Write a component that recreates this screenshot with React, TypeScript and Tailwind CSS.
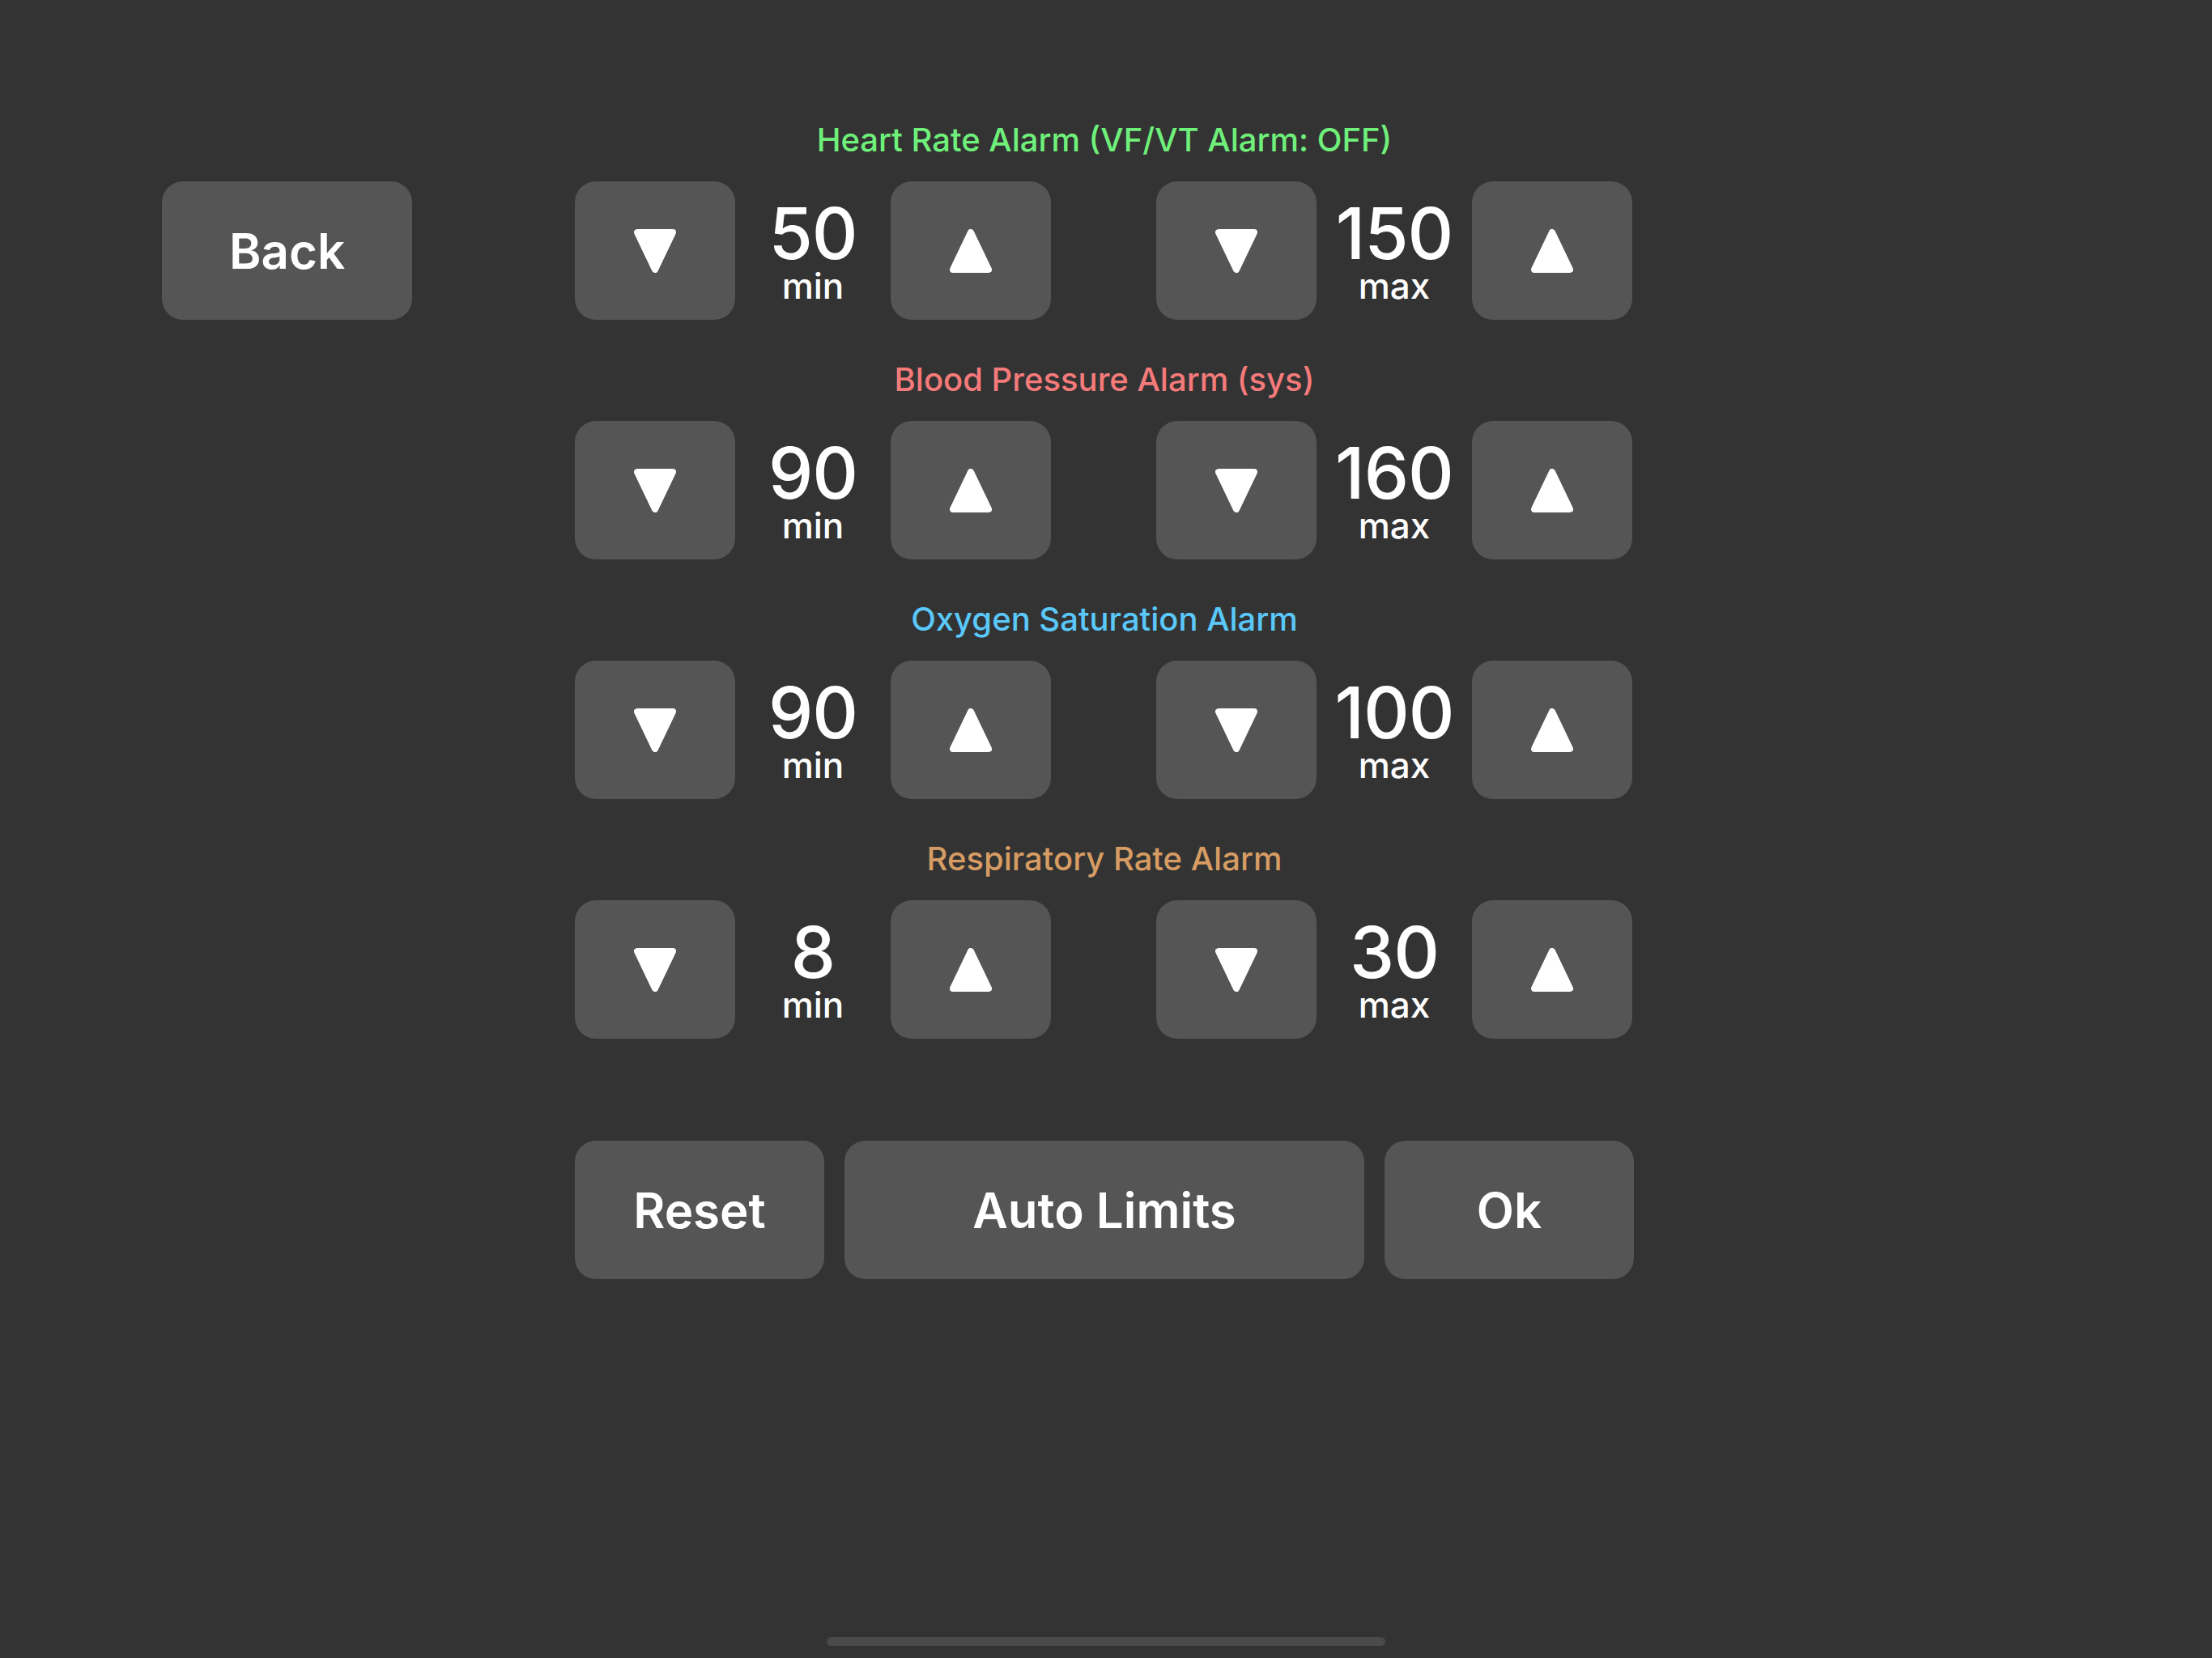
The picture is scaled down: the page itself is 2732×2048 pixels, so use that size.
const font = { fontFamily: '"Inter", "Noto Sans", "Liberation Sans", sans-serif' };

type Alarm = {
  title: string;
  color: string;
  min: number;
  max: number;
};

const alarms: Alarm[] = [
  { title: "Heart Rate Alarm (VF/VT Alarm: OFF)", color: "text-[#6ff07a]", min: 50, max: 150 },
  { title: "Blood Pressure Alarm (sys)", color: "text-[#f57a7a]", min: 90, max: 160 },
  { title: "Oxygen Saturation Alarm", color: "text-[#5ac8fa]", min: 90, max: 100 },
  { title: "Respiratory Rate Alarm", color: "text-[#d69c63]", min: 8, max: 30 },
];

const Triangle = ({ up }: { up?: boolean }) => (
  <svg width="52" height="54" viewBox="0 0 52 54">
    <polygon
      points={up ? "26,4 48,50 4,50" : "4,4 48,4 26,50"}
      fill="#ffffff"
      stroke="#ffffff"
      strokeWidth="8"
      strokeLinejoin="round"
    />
  </svg>
);

const ArrowButton = ({ up }: { up?: boolean }) => (
  <button className="w-[198px] h-[171px] rounded-[26px] bg-[#555555] flex items-center justify-center">
    <Triangle up={up} />
  </button>
);

const Stepper = ({ value, label }: { value: number; label: string }) => (
  <div className="flex items-center">
    <ArrowButton />
    <div className="w-[192px] pt-[6px] flex flex-col items-center justify-center text-white">
      <span className="text-[88px] leading-[72px] font-medium tracking-[-1px]">{value}</span>
      <span className="mt-[9px] text-[44px] leading-[40px] font-medium">{label}</span>
    </div>
    <ArrowButton up />
  </div>
);

const TextButton = ({ label, className }: { label: string; className: string }) => (
  <button
    className={`h-[171px] rounded-[26px] bg-[#555555] text-white text-[60px] font-semibold flex items-center justify-center ${className}`}
  >
    {label}
  </button>
);

export default function App() {
  return (
    <div className="min-h-[2048px] w-[2732px] bg-[#333333] flex flex-col" style={font}>
      <div className="flex items-start pt-[153px] pl-[200px]">
        <button className="mt-[71px] w-[309px] h-[171px] rounded-[26px] bg-[#555555] text-white text-[60px] font-semibold">
          Back
        </button>
        <div className="ml-[201px] w-[1308px] flex flex-col">
          {alarms.map((a) => (
            <div key={a.title} className="flex flex-col items-center mb-[54px]">
              <h2 className={`text-[40px] leading-none font-medium mb-[31px] ${a.color}`}>{a.title}</h2>
              <div className="w-full flex gap-[130px]">
                <Stepper value={a.min} label="min" />
                <Stepper value={a.max} label="max" />
              </div>
            </div>
          ))}
          <div className="mt-[72px] flex gap-[25px]">
            <TextButton label="Reset" className="w-[308px]" />
            <TextButton label="Auto Limits" className="flex-1" />
            <TextButton label="Ok" className="w-[308px]" />
          </div>
        </div>
      </div>
      <div className="mt-auto mb-[15px] mx-auto w-[690px] h-[11px] rounded-full bg-[#4a4a4a]" />
    </div>
  );
}
